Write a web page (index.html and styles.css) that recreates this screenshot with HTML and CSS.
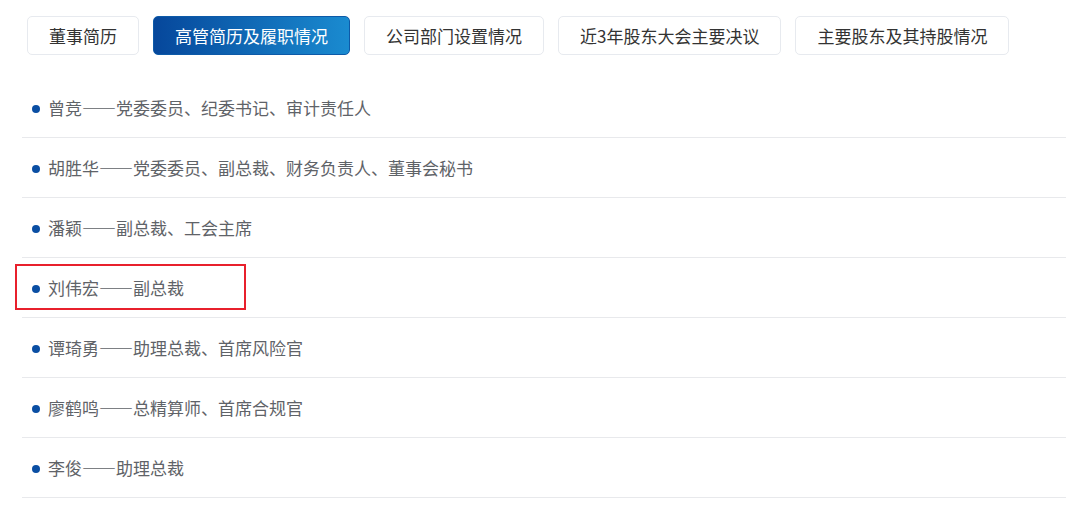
FILE: index.html
```html
<!DOCTYPE html>
<html lang="zh-CN">
<head>
<meta charset="utf-8">
<title>高管简历及履职情况</title>
<link rel="stylesheet" href="styles.css">
</head>
<body>
<div class="page">
  <nav class="tabs">
    <a class="tab">董事简历</a>
    <a class="tab active">高管简历及履职情况</a>
    <a class="tab">公司部门设置情况</a>
    <a class="tab">近3年股东大会主要决议</a>
    <a class="tab">主要股东及其持股情况</a>
  </nav>
  <ul class="list">
    <li class="row"><span class="dot"></span>曾竞——党委委员、纪委书记、审计责任人</li>
    <li class="row"><span class="dot"></span>胡胜华——党委委员、副总裁、财务负责人、董事会秘书</li>
    <li class="row"><span class="dot"></span>潘颖——副总裁、工会主席</li>
    <li class="row marked"><span class="dot"></span>刘伟宏——副总裁<span class="mark"></span></li>
    <li class="row"><span class="dot"></span>谭琦勇——助理总裁、首席风险官</li>
    <li class="row"><span class="dot"></span>廖鹤鸣——总精算师、首席合规官</li>
    <li class="row"><span class="dot"></span>李俊——助理总裁</li>
  </ul>
</div>
</body>
</html>
```
FILE: styles.css
```css
html, body {
  margin: 0;
  padding: 0;
  background: #ffffff;
}
body {
  font-family: "Noto Sans CJK SC", "Noto Sans", "Liberation Sans", sans-serif;
}
.page {
  padding: 16px 14px 0 22px;
}
.tabs {
  display: flex;
  gap: 14px;
  margin-left: 5px;
}
.tab {
  display: block;
  height: 39px;
  box-sizing: border-box;
  padding: 0 21px;
  border: 1px solid #e7eaef;
  border-radius: 5px;
  font-size: 17px;
  line-height: 37px;
  color: #333333;
  white-space: nowrap;
  background: #ffffff;
}
.tab.active {
  border-color: #0d5aa8;
  background: linear-gradient(90deg, #06479b 0%, #1a8bd0 100%);
  color: #ffffff;
}
.list {
  list-style: none;
  margin: 23px 0 0 0;
  padding: 0;
  width: 1044px;
}
.row {
  position: relative;
  display: flex;
  align-items: center;
  height: 59px;
  border-bottom: 1px solid #e8e9ec;
  padding-left: 10px;
  font-size: 17px;
  color: #5f6368;
}
.dot {
  width: 8px;
  height: 8px;
  border-radius: 50%;
  background: #0a4ea3;
  margin-right: 8px;
  margin-top: 2px;
  flex: none;
}
.mark {
  position: absolute;
  left: -7px;
  top: 6px;
  width: 227px;
  height: 42px;
  border: 2px solid #e8202c;
}
```
